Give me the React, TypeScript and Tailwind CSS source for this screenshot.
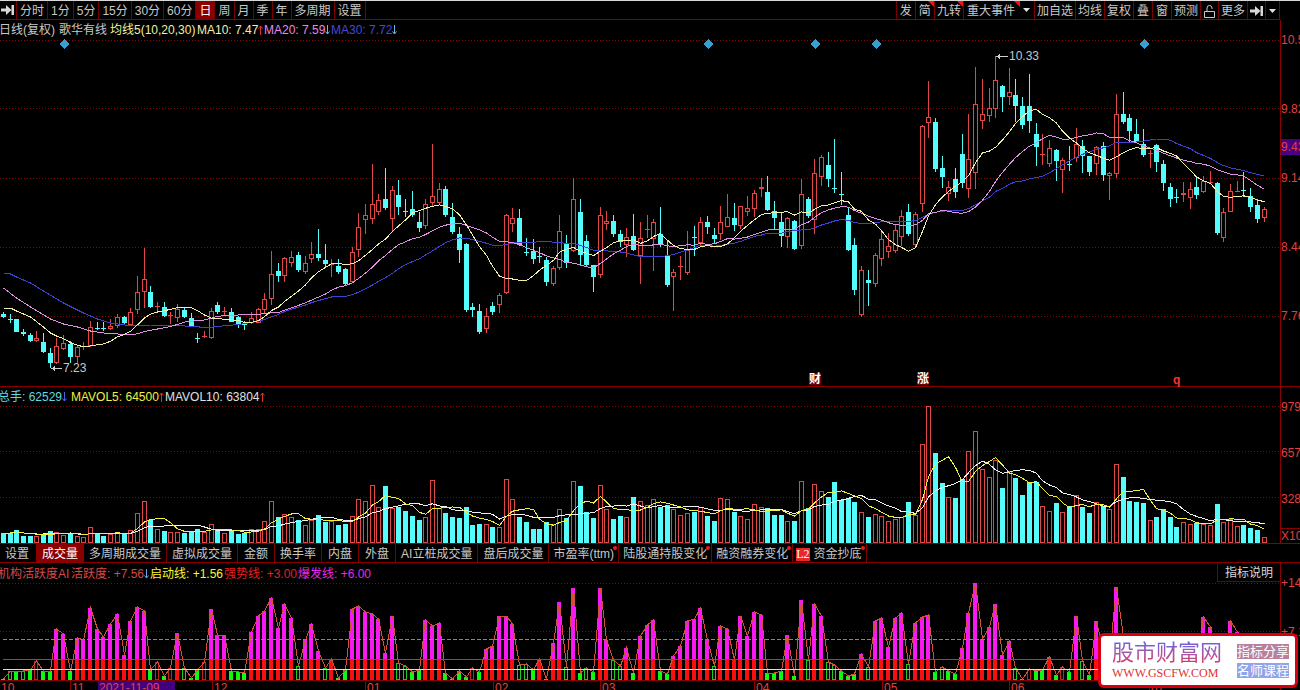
import type { ReactNode } from "react";

type Candle = [number, number, number, number, number, number];

// [rising, high, body top, body bottom, low, volume top], all on the chart's own y scale
const candles: Candle[] = [
  [0, 312, 314, 317, 318, 533], [0, 314, 319, 320, 323, 533], [0, 319, 319, 332, 332, 530],
  [0, 329, 332, 334, 336, 536], [0, 333, 335, 341, 342, 536], [1, 331, 338, 341, 342, 536],
  [0, 333, 342, 352, 353, 534], [0, 348, 353, 363, 368, 531], [1, 338, 346, 363, 364, 532],
  [1, 335, 343, 349, 350, 535], [0, 341, 344, 357, 363, 533], [1, 345, 347, 357, 363, 536],
  [1, 342, 346, 347, 350, 537], [1, 321, 327, 346, 347, 527], [0, 322, 328, 329, 330, 534],
  [0, 322, 328, 329, 331, 536], [1, 319, 326, 329, 330, 534], [1, 314, 317, 326, 328, 532],
  [0, 316, 317, 323, 325, 534], [1, 308, 312, 325, 326, 530], [1, 276, 292, 310, 314, 513],
  [1, 248, 279, 292, 308, 501], [0, 286, 292, 307, 308, 520], [1, 302, 306, 307, 311, 529],
  [0, 302, 307, 316, 317, 531], [1, 312, 315, 316, 324, 532], [1, 304, 309, 318, 322, 532],
  [0, 308, 310, 317, 318, 533], [0, 313, 318, 326, 327, 531], [0, 333, 338, 339, 343, 529],
  [1, 331, 336, 337, 338, 532], [1, 308, 311, 338, 339, 524], [0, 302, 305, 312, 314, 530],
  [1, 307, 311, 312, 316, 533], [0, 308, 312, 322, 322, 531], [0, 316, 317, 324, 328, 534],
  [0, 321, 324, 325, 330, 533], [1, 312, 318, 323, 324, 529], [1, 308, 309, 323, 323, 529],
  [1, 293, 299, 310, 313, 521], [1, 251, 274, 299, 305, 501], [0, 263, 271, 276, 282, 517],
  [1, 257, 258, 276, 282, 514], [1, 251, 257, 263, 267, 517], [0, 252, 255, 270, 272, 520],
  [1, 256, 263, 272, 274, 525], [1, 242, 254, 259, 263, 520], [0, 229, 254, 258, 261, 515],
  [0, 244, 260, 264, 267, 522], [1, 259, 264, 265, 277, 521], [0, 259, 266, 272, 274, 525],
  [0, 268, 269, 284, 285, 524], [1, 247, 252, 282, 283, 516], [1, 213, 227, 250, 257, 499],
  [1, 204, 215, 220, 234, 501], [1, 164, 204, 219, 224, 485], [1, 194, 200, 212, 215, 507],
  [0, 168, 199, 208, 210, 486], [1, 186, 190, 219, 232, 508], [0, 180, 195, 207, 215, 507],
  [0, 199, 211, 212, 217, 511], [0, 191, 209, 215, 217, 516], [0, 212, 222, 228, 232, 520],
  [1, 199, 204, 226, 229, 517], [1, 144, 196, 203, 207, 480], [1, 183, 189, 203, 205, 508],
  [0, 186, 189, 215, 217, 513], [0, 203, 217, 232, 234, 517], [0, 227, 234, 250, 263, 518],
  [0, 243, 244, 310, 312, 507], [0, 303, 307, 310, 317, 525], [0, 304, 311, 332, 334, 524],
  [1, 308, 316, 329, 333, 524], [0, 302, 306, 312, 315, 527], [1, 293, 295, 305, 313, 527],
  [1, 214, 215, 293, 294, 479], [1, 208, 218, 224, 232, 499], [0, 209, 218, 245, 246, 517],
  [0, 238, 252, 253, 256, 522], [0, 239, 251, 259, 264, 529], [0, 247, 256, 257, 263, 529],
  [0, 257, 260, 282, 286, 522], [1, 266, 268, 284, 286, 524], [1, 215, 231, 268, 270, 509],
  [0, 235, 243, 263, 268, 518], [1, 178, 199, 251, 252, 481], [0, 199, 212, 255, 265, 486],
  [0, 235, 241, 265, 266, 512], [0, 265, 265, 277, 292, 518], [1, 207, 215, 275, 278, 485],
  [1, 211, 221, 224, 230, 509], [0, 215, 221, 234, 237, 519], [0, 230, 234, 242, 247, 516],
  [1, 228, 237, 245, 257, 517], [0, 214, 236, 250, 251, 497], [1, 222, 238, 256, 284, 501],
  [1, 215, 229, 230, 238, 505], [1, 219, 222, 239, 271, 499], [0, 207, 234, 245, 247, 507],
  [0, 241, 256, 285, 287, 505], [1, 269, 272, 277, 311, 509], [1, 256, 266, 267, 280, 515],
  [1, 231, 250, 273, 275, 513], [0, 226, 237, 238, 256, 512], [1, 217, 222, 243, 247, 507],
  [0, 216, 222, 227, 234, 516], [0, 228, 235, 239, 244, 521], [1, 206, 222, 234, 240, 498],
  [1, 194, 217, 227, 227, 499], [0, 203, 218, 225, 231, 512], [1, 206, 206, 226, 229, 516],
  [1, 196, 208, 212, 216, 519], [1, 190, 193, 209, 217, 504], [1, 178, 187, 189, 197, 507],
  [0, 176, 192, 210, 211, 508], [0, 201, 211, 218, 229, 515], [0, 212, 222, 236, 247, 515],
  [1, 217, 218, 237, 248, 521], [0, 220, 221, 249, 250, 521], [1, 179, 194, 246, 249, 481],
  [0, 197, 199, 216, 218, 508], [1, 159, 173, 220, 234, 484], [1, 155, 157, 177, 186, 491],
  [0, 152, 165, 179, 187, 497], [0, 139, 188, 189, 193, 482], [0, 172, 194, 195, 205, 500],
  [0, 208, 215, 250, 251, 498], [0, 238, 245, 290, 295, 502], [1, 266, 270, 315, 317, 512],
  [0, 270, 280, 283, 306, 517], [1, 253, 255, 284, 287, 514], [1, 232, 239, 259, 266, 516],
  [1, 233, 246, 252, 258, 521], [1, 224, 230, 251, 253, 519], [1, 210, 216, 237, 246, 517],
  [0, 204, 212, 234, 236, 502], [1, 212, 214, 245, 248, 515], [1, 125, 126, 204, 212, 444],
  [1, 81, 117, 123, 138, 406], [0, 118, 122, 169, 172, 453], [0, 156, 168, 177, 188, 483],
  [1, 181, 187, 194, 201, 497], [0, 168, 179, 192, 198, 498], [0, 134, 154, 183, 188, 479],
  [1, 114, 159, 189, 198, 451], [1, 67, 104, 173, 189, 431], [1, 79, 114, 121, 129, 469],
  [1, 88, 108, 116, 122, 477], [1, 56, 80, 109, 118, 460], [0, 85, 86, 97, 112, 488],
  [1, 68, 92, 97, 105, 471], [0, 79, 95, 106, 122, 478], [0, 97, 106, 125, 129, 495],
  [0, 74, 106, 121, 133, 482], [0, 123, 134, 147, 166, 482], [1, 134, 154, 155, 165, 506],
  [1, 140, 148, 164, 167, 511], [0, 149, 150, 161, 181, 503], [1, 158, 160, 170, 193, 512],
  [0, 146, 164, 165, 171, 506], [1, 128, 144, 158, 162, 495], [0, 140, 146, 156, 173, 507],
  [0, 156, 156, 172, 176, 513], [1, 146, 147, 164, 175, 502], [0, 142, 146, 175, 181, 506],
  [1, 172, 173, 176, 200, 509], [1, 94, 114, 174, 178, 464], [0, 92, 114, 122, 124, 477],
  [0, 114, 118, 131, 142, 501], [0, 119, 134, 142, 143, 502], [0, 129, 144, 155, 157, 503],
  [1, 150, 153, 154, 168, 520], [0, 144, 145, 162, 172, 517], [0, 160, 164, 183, 191, 509],
  [0, 183, 187, 199, 207, 517], [0, 189, 197, 198, 203, 527], [1, 182, 193, 195, 202, 522],
  [1, 182, 189, 198, 209, 524], [0, 177, 187, 195, 199, 523], [1, 176, 181, 192, 193, 524],
  [1, 171, 182, 183, 184, 525], [0, 182, 183, 233, 235, 504], [1, 208, 212, 238, 242, 522],
  [1, 184, 191, 212, 212, 519], [1, 181, 191, 192, 192, 526], [0, 172, 190, 191, 197, 525],
  [0, 188, 196, 207, 212, 528], [0, 199, 205, 219, 223, 530], [1, 207, 209, 218, 222, 537],
];

// m = magenta over red, f = solid green, g = hollow green, r = hollow red; number = height of the bar
const activity =
  "f1 g9 f9 g9 f10 r19 f9 f9 m51 m46 f9 m42 m40 m72 m51 m43 m56 m66 m25 m59 m73 m69 f10 r18 f4 r12 m47 g12 f2 f10 " +
  "r18 m71 m45 m45 f9 f8 f7 m48 m64 m69 m82 m52 m76 m62 g14 m40 m56 m29 g12 m21 f2 f10 m71 m74 m68 m66 m61 m27 m64 g17 " +
  "g14 f8 f10 m60 m54 m57 f7 f1 f9 f3 r12 f8 m31 m34 m64 m64 m56 g15 g16 f10 m21 f1 m37 m78 g13 m92 f7 g12 f8 m92 " +
  "m40 g20 g14 m32 f7 m44 m55 m60 f9 f6 m24 m34 m59 m61 m72 m40 g14 m54 m51 m20 m64 m44 m68 m65 f7 f7 f9 m45 f4 m80 " +
  "g20 m76 m64 g18 g15 f9 f4 f6 m26 g13 m59 m62 m33 m62 m67 g16 m57 m63 m65 f8 g13 f9 f6 m32 m67 m97 m41 m53 m76 m25 " +
  "m39 g12 f1 r11 f9 f10 m23 f5 r13 f8 m64 g19 f5 m59 m28 m22 m93 m43 f9 f7 g12 f8 f9 g13 m24 m30 f8 f9 g12 m63 " +
  "m53 f9 f7 m59 m48 f9 f6 g12 f8";

const bars = activity.split(" ").map((s) => ({ kind: s[0], top: 680 - Number(s.slice(1)) }));

const RED = "#e04848";
const CYAN = "#54fcfc";
const WIDTH = 1280;

const cx = (i: number) => Math.floor(3.3 + 6.706 * i);

function average(values: number[], period: number, from: number) {
  const out: string[] = [];
  for (let i = from; i < values.length; i++) {
    const part = values.slice(Math.max(0, i - period + 1), i + 1);
    const mean = part.reduce((a, b) => a + b, 0) / part.length;
    out.push(`${cx(i) + 0.5},${mean.toFixed(1)}`);
  }
  return out.join(" ");
}

const lead = (points: [number, number][]) => points.map(([i, y]) => `${cx(i) + 0.5},${y}`).join(" ");

const closes = candles.map((c) => (c[0] ? c[2] : c[3]));
const volumes = candles.map((c) => c[5]);

const ma10 =
  lead([[0, 308], [1, 308], [2, 311], [4, 317], [6, 327], [7, 333], [8, 336]]) + " " + average(closes, 10, 9);
const ma20 =
  lead([[0, 288], [2, 298], [4, 307], [7, 319], [9, 324], [11, 327], [13, 331], [15, 333], [17, 334]]) +
  " " +
  average(closes, 20, 19);
const ma30 =
  lead([[0, 273], [1, 274], [2, 277], [4, 283], [6, 291], [9, 303], [12, 313], [14, 319], [16, 323], [18, 325], [20, 326], [22, 325], [25, 325], [27, 326]]) +
  " " +
  average(closes, 30, 29);

function GridLines({ rows }: { rows: number[] }) {
  return (
    <>
      {rows.map((y) => (
        <line key={y} x1={0} x2={WIDTH} y1={y + 0.5} y2={y + 0.5} stroke="#7c0808" strokeDasharray="1 2" />
      ))}
    </>
  );
}

interface ChartProps {
  top: number;
  height: number;
  className: string;
  label: string;
  children: ReactNode;
}

function Chart({ top, height, className, label, children }: ChartProps) {
  return (
    <svg
      className={`block w-full ${className}`}
      viewBox={`0 ${top} ${WIDTH} ${height}`}
      preserveAspectRatio="none"
      shapeRendering="crispEdges"
      fill="none"
      role="img"
      aria-label={label}
    >
      {children}
    </svg>
  );
}

function Arrow({ up, color }: { up?: boolean; color: string }) {
  return (
    <svg className="inline-block h-[10px] w-[5px]" viewBox="0 0 5 10" fill="none" stroke={color}>
      <path d={up ? "M2.5 10V1M.5 3.5l2-2.5 2 2.5" : "M2.5 0v9M.5 6.5l2 2.5 2-2.5"} />
    </svg>
  );
}

function JumpIcon() {
  return (
    <svg className="h-[10px] w-[13px]" viewBox="0 0 13 10" fill="#d8d8d8">
      <path d="M0 3.5h5V0l5.500 5L5 10V6.500H0zM10.500 0H13v10h-2.500z" />
    </svg>
  );
}

function Caret() {
  return (
    <svg className="h-1 w-[7px]" viewBox="0 0 7 4" fill="#e0e0e0">
      <path d="M0 0h7L3.500 4z" />
    </svg>
  );
}

function LockIcon() {
  return (
    <svg className="h-[13px] w-[11px]" viewBox="0 0 11 13" fill="none" stroke="#c8c8c8">
      <path d="M.5 6.500h10v6H.5zM3 6V3a2.500 2.500 0 0 1 5 0v1" />
    </svg>
  );
}

function Corner() {
  return (
    <svg className="absolute top-0 right-0 size-[6px]" viewBox="0 0 6 6" fill="#ff1010">
      <path d="M0 0h6v6z" />
    </svg>
  );
}

const periods = ["分时", "1分", "5分", "15分", "30分", "60分", "日", "周", "月", "季", "年", "多周期", "设置"];

const toolButton = "relative flex h-full items-center border-l border-[#7a0000] pt-[2px]";

function Toolbar() {
  return (
    <header className="flex h-5 border-t border-t-[#d8d8d8]">
      <div className="flex h-full min-w-0 flex-1 justify-between border-r border-b border-[#8a0000]">
        <nav className="flex border-r border-[#7a0000]">
          <button className="flex w-4 items-center pl-px" aria-label="跳转">
            <JumpIcon />
          </button>
          {periods.map((p) => (
            <button
              key={p}
              className={`${toolButton} px-[3px] ${p === "日" ? "bg-[#8a0000] text-white" : ""}`}
            >
              {p}
            </button>
          ))}
        </nav>
        <nav className="flex">
          <button className={`${toolButton} px-[3px]`}>发</button>
          <button className={`${toolButton} px-[3px]`}>简<Corner /></button>
          <button className={`${toolButton} px-[2px]`}>九转<Corner /></button>
          <button className={`${toolButton} w-[57px] pl-[3px]`}>重大事件<Corner /></button>
          <button className="flex w-[14px] items-center justify-center" aria-label="更多事件"><Caret /></button>
          <button className={`${toolButton} px-[2px]`}>加自选</button>
          <button className={`${toolButton} px-[2px]`}>均线</button>
          <button className={`${toolButton} px-[2px]`}>复权</button>
          <button className={`${toolButton} px-[3px]`}>叠</button>
          <button className={`${toolButton} px-[3px]`}>窗</button>
          <button className={`${toolButton} px-[2px]`}>预测</button>
          <button className={`${toolButton} w-[18px] justify-center`} aria-label="锁定"><LockIcon /></button>
          <button className={`${toolButton} px-[2px]`}>更多</button>
          <button className={`${toolButton} w-[18px] justify-center`} aria-label="展开"><JumpIcon /></button>
          <button className={`${toolButton} w-[14px] justify-center`} aria-label="菜单"><Caret /></button>
        </nav>
      </div>
      <div className="w-5" />
    </header>
  );
}

const left = (x: number) => ({ left: `${(x / WIDTH) * 100}%` });

function PricePane() {
  return (
    <section className="flex border-b border-[#8a0000]">
      <div className="relative min-w-0 flex-1">
        <div className="flex h-[19px] items-center whitespace-nowrap">
          <span className="-ml-px w-[60px]">日线(复权)</span>
          <span className="w-[51px]">歌华有线</span>
          <span className="w-[87px] text-[#f0f0a0]">均线5(10,20,30)</span>
          <span className="w-[67px] text-[#f0f0b0]">MA10: 7.47<Arrow up color="#e03030" /></span>
          <span className="w-[67px] text-[#e888e8]">MA20: 7.59<Arrow color="#68b8e8" /></span>
          <span className="text-[#4848d8]">MA30: 7.72<Arrow color="#68b8e8" /></span>
        </div>
        <Chart top={39} height={347} className="h-[347px]" label="日K线">
          <GridLines rows={[40, 108, 178, 247, 316]} />
          {candles.map(([up, high, top, bottom, low], i) => {
            const x = cx(i);
            const color = up ? RED : CYAN;
            return (
              <g key={i}>
                <path d={`M${x + 0.5} ${high}V${low}`} stroke={color} />
                {bottom - top < 2 ? (
                  <path d={`M${x - 2} ${top + 0.5}h5`} stroke={color} />
                ) : up ? (
                  <rect x={x - 1.5} y={top + 0.5} width={4} height={bottom - top - 1} fill="#000" stroke={color} />
                ) : (
                  <rect x={x - 2} y={top} width={5} height={bottom - top} fill={color} />
                )}
              </g>
            );
          })}
          <polyline points={ma30} stroke="#4040d0" />
          <polyline points={ma20} stroke="#e090e0" />
          <polyline points={ma10} stroke="#f0f0a8" />
          {[64, 708, 815, 876, 1144].map((x) => (
            <path key={x} d={`M${x + 0.5} 39l5 5-5 5-5-5z`} fill="#38a0d0" />
          ))}
          <path d="M996 56.5h12M51 368.500h11" stroke="#d0d0d0" />
          <path d="M996 56.500l4-2.500v5zM51 368.500l4-2.500v5z" fill="#d0d0d0" />
        </Chart>
        <span className="absolute top-[28px] leading-4" style={left(1009)}>10.33</span>
        <span className="absolute top-[340px] leading-4" style={left(63)}>7.23</span>
        <span className="absolute top-[353px] bg-[#700000] leading-3 font-bold text-white" style={left(809)}>财</span>
        <span className="absolute top-[353px] bg-[#700000] leading-3 font-bold text-white" style={left(917)}>涨</span>
        <span className="absolute top-[352px] leading-4 font-bold text-[#ff3030]" style={left(1173)}>q</span>
      </div>
      <div className="relative flex w-5 flex-col gap-[53px] overflow-hidden border-l border-[#8a0000] pt-3 leading-4 text-[#e04040]">
        <span>10.5</span>
        <span>9.82</span>
        <span>9.14</span>
        <span>8.44</span>
        <span>7.76</span>
        <span className="absolute top-[119px] left-0 w-full bg-[#480080] leading-4">9.43</span>
      </div>
    </section>
  );
}

function VolumePane() {
  return (
    <section className="flex">
      <div className="min-w-0 flex-1 border-b border-[#8a0000]">
        <div className="flex h-[19px] items-center whitespace-nowrap">
          <span className="-ml-[2px] w-[73px] text-[#60d8e0]">总手: 62529<Arrow color="#4868e0" /></span>
          <span className="w-[94px] text-[#f0f040]">MAVOL5: 64500<Arrow up color="#e03030" /></span>
          <span className="text-[#e0e0e0]">MAVOL10: 63804<Arrow up color="#e03030" /></span>
        </div>
        <Chart top={406} height={137} className="h-[137px]" label="成交量">
          <GridLines rows={[406, 451, 497]} />
          {candles.map(([up, , , , , top], i) =>
            up ? (
              <rect key={i} x={cx(i) - 1.5} y={top + 0.5} width={4} height={542 - top} fill="#000" stroke={RED} />
            ) : (
              <rect key={i} x={cx(i) - 2} y={top} width={5} height={543 - top} fill={CYAN} />
            ),
          )}
          <polyline points={average(volumes, 10, 0)} stroke="#f0f0f0" />
          <polyline points={average(volumes, 5, 0)} stroke="#f0f040" />
        </Chart>
      </div>
      <div className="flex w-5 flex-col overflow-hidden border-b border-l border-[#8a0000] pt-3 leading-4 text-[#e04040]">
        <div className="flex flex-col gap-[30px]">
          <span>979</span>
          <span>657</span>
          <span>328</span>
        </div>
        <span className="mt-auto border-t border-[#8a0000] leading-[14px]">X10</span>
      </div>
    </section>
  );
}

const tabs = [
  { name: "多周期成交量" },
  { name: "虚拟成交量" },
  { name: "金额" },
  { name: "换手率" },
  { name: "内盘" },
  { name: "外盘" },
  { name: "AI立桩成交量" },
  { name: "盘后成交量" },
  { name: "市盈率(ttm)", dot: true },
  { name: "陆股通持股变化", dot: true },
  { name: "融资融券变化", dot: true },
  { name: "资金抄底", dot: true, level2: true },
];

function tabPadding(tab: { name: string; dot?: boolean }) {
  if (tab.dot) return "px-1";
  return tab.name.length === 2 ? "px-[6px]" : "px-[5px]";
}

function IndicatorTabs() {
  return (
    <nav className="flex h-[19px] border-b border-[#8a0000]">
      <button className="w-9 pt-[2px] pr-[2px]">设置</button>
      <button className="w-12 bg-[#8a0000] pt-[2px] text-white">成交量</button>
      {tabs.map((tab) => (
        <button
          key={tab.name}
          className={`relative flex items-center border-r border-[#7a0000] pt-[2px] whitespace-nowrap ${tabPadding(tab)}`}
        >
          {tab.level2 && (
            <span className="mr-1 -ml-px bg-[#e82828] font-['Liberation_Serif',serif] leading-[13px] text-white">
              L2
            </span>
          )}
          {tab.name}
          {tab.dot && <span className="absolute top-[2px] right-px size-1 rounded-full bg-[#f01818]" />}
        </button>
      ))}
    </nav>
  );
}

function ActivityPane() {
  return (
    <section className="flex min-h-0 flex-1">
      <div className="min-w-0 flex-1">
        <div className="flex h-[19px] items-center justify-between whitespace-nowrap">
          <div className="flex pt-[2px]">
            <span className="-ml-[2px] w-[73px] text-[#d84848]">机构活跃度AI</span>
            <span className="w-[79px] text-[#d84848]">活跃度: +7.56<Arrow color="#58a8f0" /></span>
            <span className="w-[74px] text-[#f8f830]">启动线: +1.56</span>
            <span className="w-[74px] text-[#e02020]">强势线: +3.00</span>
            <span className="text-[#e828e8]">爆发线: +6.00</span>
          </div>
          <button className="h-full border-b border-l border-[#7a0000] px-[7px] pt-[2px] text-[#d8d8d8]">指标说明</button>
        </div>
        <Chart top={582} height={99} className="h-[99px]" label="机构活跃度">
          <GridLines rows={[583, 631]} />
          {bars.map(({ kind, top }, i) => {
            const x = cx(i) - 2;
            if (kind === "m") {
              return (
                <g key={i}>
                  <rect x={x} y={top} width={4} height={Math.max(660 - top, 0)} fill="#f818f0" />
                  <rect x={x} y={660} width={4} height={20} fill="#f81010" />
                </g>
              );
            }
            if (kind === "f") {
              return <rect key={i} x={x} y={top} width={4} height={680 - top} fill="#10f810" />;
            }
            return (
              <rect
                key={i}
                x={x + 0.5}
                y={top + 0.5}
                width={3}
                height={679 - top}
                stroke={kind === "g" ? "#20c820" : "#c02020"}
              />
            );
          })}
          <polyline points={bars.map((b, i) => `${cx(i) + 0.5},${b.top}`).join(" ")} stroke="#d05038" />
          <rect x={3} y={659} width={1261} height={1} fill="#f02020" />
          <rect x={3} y={669} width={1261} height={1} fill="#f8f030" />
          <line x1={3} x2={1264} y1={639.5} y2={639.5} stroke="#e048e0" strokeDasharray="4 2" />
          <rect x={0} y={680} width={WIDTH} height={1} fill="#8a0000" />
        </Chart>
        <DateAxis />
      </div>
      <div className="flex w-5 flex-col gap-[33px] overflow-hidden border-l border-[#8a0000] pt-3 leading-4 text-[#e04040]">
        <span>+14</span>
        <span>+7.1</span>
      </div>
    </section>
  );
}

const months: [number, string][] = [
  [70, "11"], [212, "12"], [365, "01"], [493, "02"], [600, "03"], [754, "04"], [882, "05"], [1009, "06"], [1149, "07"],
];

function DateAxis() {
  return (
    <div className="relative h-[9px] overflow-hidden leading-[14px] text-[#e04040]">
      <span className="pl-px">10</span>
      {months.map(([x, m]) => (
        <span key={m} className="absolute top-0 border-l border-[#8a0000] pl-px" style={left(x)}>
          {m}
        </span>
      ))}
      <span className="absolute top-0 w-[77px] bg-[#400080] pl-px" style={left(98)}>2021-11-09</span>
    </div>
  );
}

function SiteCard() {
  return (
    <aside className="absolute right-[2px] bottom-[2px] flex h-[55px] w-[200px] items-center justify-between rounded-md border-[3px] border-[#d80010] bg-white pr-[6px] pl-[11px]">
      <div>
        <div className="bg-linear-to-b from-[#6060e8] to-[#e02060] bg-clip-text text-[22px] leading-6 text-transparent">
          股市财富网
        </div>
        <a href="#" className="block font-['Liberation_Serif',serif] text-xs leading-4 text-[#e03030]">
          WWW.GSCFW.COM
        </a>
      </div>
      <div className="flex flex-col gap-1 text-[13px] leading-[15px] text-white">
        <span className="bg-[#b8809c]">指标分享</span>
        <span className="bg-[#90a4e8]">名师课程</span>
      </div>
    </aside>
  );
}

export default function App() {
  return (
    <main className="relative flex h-screen flex-col overflow-hidden bg-black font-['Liberation_Sans','Noto_Sans_CJK_SC',sans-serif] text-xs text-[#c8c8c8]">
      <Toolbar />
      <PricePane />
      <VolumePane />
      <IndicatorTabs />
      <ActivityPane />
      <SiteCard />
    </main>
  );
}
